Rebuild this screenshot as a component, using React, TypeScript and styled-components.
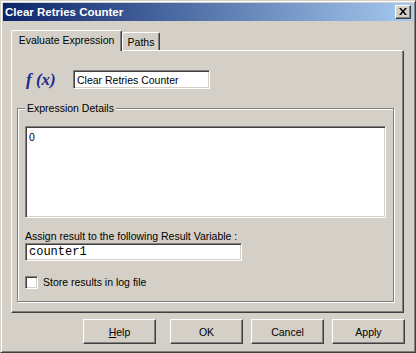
import React from 'react';
import styled, { createGlobalStyle } from 'styled-components';

const GlobalStyle = createGlobalStyle`
  html, body {
    margin: 0;
    padding: 0;
    background: #d4d0c8;
  }
  body {
    font-family: 'Liberation Sans', Arial, sans-serif;
    font-size: 10.5px;
    color: #000;
  }
`;

export default function App() {
  return (
    <>
      <GlobalStyle />
      <Window>
        <TitleBar>
          <Title>Clear Retries Counter</Title>
          <CloseButton>
            <svg width="8" height="7" viewBox="0 0 8 7">
              <path d="M0 0h2l2 2.5L6 0h2L5 3.5 8 7H6L4 4.5 2 7H0l3-3.5z" fill="#000" />
            </svg>
          </CloseButton>
        </TitleBar>
        <Body>
          <TabStrip>
            <Tab $active $width={111}>Evaluate Expression</Tab>
            <Tab $width={38}>Paths</Tab>
          </TabStrip>
          <Panel>
            <NameRow>
              <Fx>f (x)</Fx>
              <TextBox $width={137} $height={19} defaultValue="Clear Retries Counter" />
            </NameRow>
            <GroupBox>
              <Legend>Expression Details</Legend>
              <ExprArea defaultValue="0" />
              <FieldLabel>Assign result to the following Result Variable :</FieldLabel>
              <TextBox $width={217} $height={18} $mono defaultValue="counter1" />
              <CheckRow>
                <CheckBox />
                <span>Store results in log file</span>
              </CheckRow>
            </GroupBox>
          </Panel>
          <ButtonRow>
            <Button $gap={6}>
              <u>H</u>elp
            </Button>
            <Button>OK</Button>
            <Button>Cancel</Button>
            <Button>Apply</Button>
          </ButtonRow>
        </Body>
      </Window>
    </>
  );
}

const Window = styled.div`
  width: 416px;
  height: 353px;
  box-sizing: border-box;
  border: 1px solid;
  border-color: #d4d0c8 #404040 #404040 #d4d0c8;
  box-shadow: inset 1px 1px 0 #fff, inset -1px -1px 0 #808080;
  padding: 2px;
  background: #d4d0c8;
`;

const TitleBar = styled.div`
  height: 18px;
  display: flex;
  align-items: center;
  justify-content: space-between;
  padding: 0 2px;
  background: linear-gradient(to right, #0a246a, #a6caf0);
`;

const Title = styled.span`
  color: #fff;
  font-weight: bold;
  font-size: 11.5px;
`;

const CloseButton = styled.div`
  width: 16px;
  height: 14px;
  box-sizing: border-box;
  background: #d4d0c8;
  border: 1px solid;
  border-color: #fff #404040 #404040 #fff;
  box-shadow: inset -1px -1px 0 #808080;
  display: flex;
  align-items: center;
  justify-content: center;
  padding: 0 1px 1px 0;
`;

const Body = styled.div`
  padding: 9px 0 0 8px;
`;

const TabStrip = styled.div`
  display: flex;
  align-items: flex-end;
  height: 20px;
`;

const Tab = styled.div<{ $active?: boolean; $width: number }>`
  width: ${(p) => p.$width}px;
  height: ${(p) => (p.$active ? 21 : 18)}px;
  margin-bottom: ${(p) => (p.$active ? -1 : 0)}px;
  box-sizing: border-box;
  border: 1px solid;
  border-bottom: none;
  border-color: #fff #404040 #fff #fff;
  border-radius: 2px 2px 0 0;
  box-shadow: inset -1px 0 0 #808080;
  background: #d4d0c8;
  position: relative;
  z-index: ${(p) => (p.$active ? 1 : 0)};
  text-align: center;
  line-height: ${(p) => (p.$active ? 18 : 19)}px;
  font-size: 10.5px;
`;

const Panel = styled.div`
  width: 393px;
  height: 263px;
  box-sizing: border-box;
  border: 1px solid;
  border-color: #fff #404040 #404040 #fff;
  box-shadow: inset -1px -1px 0 #808080;
  padding: 19px 0 0 5px;
`;

const NameRow = styled.div`
  display: flex;
  align-items: center;
  height: 19px;
`;

const Fx = styled.span`
  font-family: 'Liberation Serif', 'Times New Roman', serif;
  font-style: italic;
  font-weight: bold;
  font-size: 17px;
  color: #1c2a8e;
  margin: 0 18px 0 9px;
  width: 29px;
  white-space: nowrap;
`;

const sunken = `
  box-sizing: border-box;
  border: 1px solid;
  border-color: #808080 #fff #fff #808080;
  box-shadow: inset 1px 1px 0 #404040, inset -1px -1px 0 #d4d0c8;
  background: #fff;
  outline: none;
  margin: 0;
`;

const TextBox = styled.input<{ $width: number; $height: number; $mono?: boolean }>`
  ${sunken}
  width: ${(p) => p.$width}px;
  height: ${(p) => p.$height}px;
  padding: 0 3px;
  font-family: ${(p) => (p.$mono ? "'Liberation Mono', 'Courier New', monospace" : "'Liberation Sans', Arial, sans-serif")};
  font-size: ${(p) => (p.$mono ? 12 : 10.5)}px;
  color: #000;
`;

const GroupBox = styled.div`
  margin-top: 19px;
  width: 377px;
  height: 194px;
  box-sizing: border-box;
  border: 1px solid #808080;
  box-shadow: inset 1px 1px 0 #fff, 1px 1px 0 #fff;
  padding: 0 7px;
  display: flex;
  flex-direction: column;
  align-items: flex-start;
`;

const Legend = styled.span`
  margin-top: -7px;
  padding: 0 2px;
  line-height: 13px;
  background: #d4d0c8;
`;

const ExprArea = styled.textarea`
  ${sunken}
  margin-top: 11px;
  width: 361px;
  height: 92px;
  padding: 4px 3px;
  resize: none;
  font-family: 'Liberation Sans', Arial, sans-serif;
  font-size: 10.5px;
  color: #000;
`;

const FieldLabel = styled.span`
  margin-top: 12px;
  line-height: 13px;
`;

const CheckRow = styled.label`
  margin-top: 15px;
  display: flex;
  align-items: center;
  gap: 5px;
  line-height: 13px;
`;

const CheckBox = styled.span`
  ${sunken}
  width: 13px;
  height: 13px;
  display: inline-block;
`;

const ButtonRow = styled.div`
  display: flex;
  justify-content: flex-end;
  gap: 8px;
  margin-top: 6px;
  width: 394px;
`;

const Button = styled.div<{ $gap?: number }>`
  width: 73px;
  height: 25px;
  box-sizing: border-box;
  border: 1px solid;
  border-color: #fff #404040 #404040 #fff;
  box-shadow: inset -1px -1px 0 #808080;
  display: flex;
  align-items: center;
  justify-content: center;
  margin-right: ${(p) => p.$gap ?? 0}px;
  font-size: 10.5px;
`;
